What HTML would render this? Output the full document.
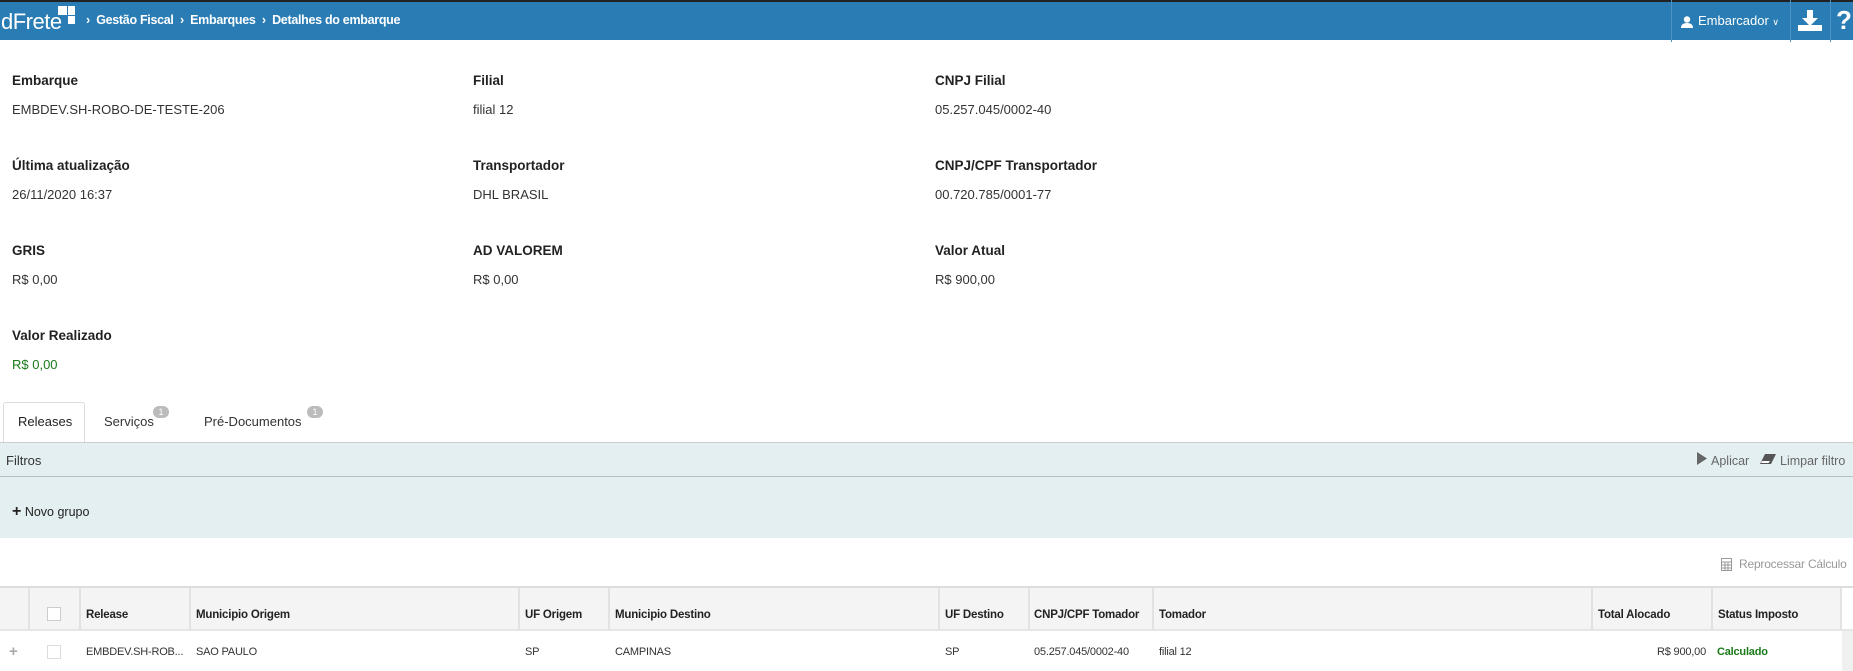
<!DOCTYPE html>
<html><head><meta charset="utf-8"><style>
*{box-sizing:border-box;margin:0;padding:0}
body{width:1853px;height:671px;overflow:hidden;background:#fff;font-family:"Liberation Sans",sans-serif;color:#333;position:relative}
.a{position:absolute;white-space:nowrap}
.hdr{position:absolute;left:0;top:0;width:1853px;height:40px;background:#2a7db4;border-top:2px solid #222}
.hdr .a{color:#fff}
.lbl{font-size:13.5px;color:#222;font-weight:bold}
.val{font-size:13px;color:#333}
.th{font-size:11.5px;font-weight:bold;color:#222;letter-spacing:-0.2px}
.td{font-size:11px;color:#333;letter-spacing:-0.2px}
.vl{position:absolute;top:588px;height:42px;width:2px;background:#e2e2e2}
</style></head><body>
<div class="hdr">
 <div class="a" style="left:1px;top:7px;font-size:22px;letter-spacing:-0.5px">dFrete</div>
 <div class="a" style="left:58px;top:4px;width:9px;height:9px;background:#fff"></div>
 <div class="a" style="left:68px;top:4px;width:7px;height:9px;background:#fff"></div>
 <div class="a" style="left:68px;top:14px;width:7px;height:8px;background:#fff"></div>
 <div class="a" style="left:86px;top:11px;font-size:12.5px;font-weight:bold;letter-spacing:-0.3px">›&nbsp; Gestão Fiscal &nbsp;›&nbsp; Embarques &nbsp;›&nbsp; Detalhes do embarque</div>
 <div class="a" style="left:1671px;top:-2px;width:1px;height:42px;background:#4b93c4"></div>
 <div class="a" style="left:1790px;top:-2px;width:1px;height:42px;background:#4b93c4"></div>
 <div class="a" style="left:1830px;top:-2px;width:1px;height:42px;background:#4b93c4"></div>
 <svg class="a" style="left:1681px;top:14px" width="12" height="12"><circle cx="6" cy="3.5" r="3.2" fill="#fff"/><path d="M0 12 Q0 7 6 7 Q12 7 12 12Z" fill="#fff"/></svg>
 <div class="a" style="left:1698px;top:11px;font-size:13px">Embarcador <span style="font-size:9px">∨</span></div>
 <svg class="a" style="left:1798px;top:8px" width="24" height="22"><path d="M9 0h6v8h5l-8 8-8-8h5z" fill="#fff"/><rect x="0" y="15" width="24" height="6" fill="#fff"/></svg>
 <div class="a" style="left:1836px;top:3px;font-size:26px;font-weight:bold">?</div>
</div>

<div class="a lbl" style="left:12px;top:73px">Embarque</div>
<div class="a val" style="left:12px;top:102px">EMBDEV.SH-ROBO-DE-TESTE-206</div>
<div class="a lbl" style="left:473px;top:73px">Filial</div>
<div class="a val" style="left:473px;top:102px">filial 12</div>
<div class="a lbl" style="left:935px;top:73px">CNPJ Filial</div>
<div class="a val" style="left:935px;top:102px">05.257.045/0002-40</div>

<div class="a lbl" style="left:12px;top:158px">Última atualização</div>
<div class="a val" style="left:12px;top:187px">26/11/2020 16:37</div>
<div class="a lbl" style="left:473px;top:158px">Transportador</div>
<div class="a val" style="left:473px;top:187px">DHL BRASIL</div>
<div class="a lbl" style="left:935px;top:158px">CNPJ/CPF Transportador</div>
<div class="a val" style="left:935px;top:187px">00.720.785/0001-77</div>

<div class="a lbl" style="left:12px;top:243px">GRIS</div>
<div class="a val" style="left:12px;top:272px">R$ 0,00</div>
<div class="a lbl" style="left:473px;top:243px">AD VALOREM</div>
<div class="a val" style="left:473px;top:272px">R$ 0,00</div>
<div class="a lbl" style="left:935px;top:243px">Valor Atual</div>
<div class="a val" style="left:935px;top:272px">R$ 900,00</div>

<div class="a lbl" style="left:12px;top:328px">Valor Realizado</div>
<div class="a val" style="left:12px;top:357px;color:#1a7a1a">R$ 0,00</div>

<div class="a" style="left:3px;top:402px;width:82px;height:41px;border:1px solid #ddd;border-bottom:none;background:#fff;border-radius:3px 3px 0 0"></div>
<div class="a" style="left:0;top:442px;width:1853px;height:1px;background:#ccc"></div>
<div class="a val" style="left:18px;top:414px;color:#222">Releases</div>
<div class="a val" style="left:104px;top:414px">Serviços</div>
<div class="a" style="left:153px;top:406px;width:16px;height:12px;border-radius:6px;background:#bbb;color:#fff;font-size:9px;text-align:center;line-height:12px">1</div>
<div class="a val" style="left:204px;top:414px">Pré-Documentos</div>
<div class="a" style="left:307px;top:406px;width:16px;height:12px;border-radius:6px;background:#bbb;color:#fff;font-size:9px;text-align:center;line-height:12px">1</div>

<div class="a" style="left:0;top:443px;width:1853px;height:95px;background:#e4eff1"></div>
<div class="a" style="left:0;top:476px;width:1853px;height:1px;background:#b9bfc1"></div>
<div class="a val" style="left:6px;top:453px">Filtros</div>
<svg class="a" style="left:1696px;top:452px" width="12" height="13"><path d="M1 0L11 6.5 1 13Z" fill="#666"/></svg>
<div class="a val" style="left:1711px;top:454px;color:#666;font-size:12.5px">Aplicar</div>
<svg class="a" style="left:1760px;top:454px" width="16" height="10"><path d="M5 0h11l-5 10H0Z" fill="#555"/><path d="M2 7h8l-1.5 2H1Z" fill="#fff"/></svg>
<div class="a val" style="left:1780px;top:454px;color:#666;font-size:12.5px">Limpar filtro</div>
<div class="a val" style="left:12px;top:505px;font-size:12.5px;color:#222"><b style="font-size:16px;line-height:12px">+</b> Novo grupo</div>

<svg class="a" style="left:1721px;top:558px" width="11" height="13"><rect x="0.5" y="0.5" width="10" height="12" fill="none" stroke="#999"/><path d="M0 4h11M0 7h11M0 10h11M4 4v9M7 4v9" stroke="#999"/></svg>
<div class="a val" style="left:1739px;top:557px;color:#999;font-size:12px;letter-spacing:-0.2px">Reprocessar Cálculo</div>

<div class="a" style="left:0;top:586px;width:1853px;height:2px;background:#ddd"></div>
<div class="a" style="left:0;top:588px;width:1840px;height:42px;background:#f4f4f4"></div>
<div class="a" style="left:0;top:629px;width:1853px;height:2px;background:#e6e6e6"></div>
<div class="vl" style="left:28px"></div><div class="vl" style="left:79px"></div><div class="vl" style="left:189px"></div>
<div class="vl" style="left:518px"></div><div class="vl" style="left:608px"></div><div class="vl" style="left:938px"></div>
<div class="vl" style="left:1028px"></div><div class="vl" style="left:1152px"></div><div class="vl" style="left:1591px"></div>
<div class="vl" style="left:1711px"></div><div class="vl" style="left:1840px"></div>
<div class="a" style="left:47px;top:607px;width:14px;height:14px;border:1px solid #ccc;background:#fff"></div>
<div class="a th" style="left:86px;top:609px">Release</div>
<div class="a th" style="left:196px;top:609px">Municipio Origem</div>
<div class="a th" style="left:525px;top:609px">UF Origem</div>
<div class="a th" style="left:615px;top:609px">Municipio Destino</div>
<div class="a th" style="left:945px;top:609px">UF Destino</div>
<div class="a th" style="left:1034px;top:609px">CNPJ/CPF Tomador</div>
<div class="a th" style="left:1159px;top:609px">Tomador</div>
<div class="a th" style="left:1598px;top:609px">Total Alocado</div>
<div class="a th" style="left:1718px;top:609px">Status Imposto</div>

<div class="a" style="left:9px;top:643px;color:#aaa;font-size:15px;font-weight:bold">+</div>
<div class="a" style="left:47px;top:645px;width:14px;height:14px;border:1px solid #ddd;background:#fff"></div>
<div class="a td" style="left:86px;top:646px">EMBDEV.SH-ROB...</div>
<div class="a td" style="left:196px;top:646px">SAO PAULO</div>
<div class="a td" style="left:525px;top:646px">SP</div>
<div class="a td" style="left:615px;top:646px">CAMPINAS</div>
<div class="a td" style="left:945px;top:646px">SP</div>
<div class="a td" style="left:1034px;top:646px">05.257.045/0002-40</div>
<div class="a td" style="left:1159px;top:646px">filial 12</div>
<div class="a td" style="left:1630px;top:646px;width:76px;text-align:right">R$ 900,00</div>
<div class="a td" style="left:1717px;top:646px;color:#1a7a1a;font-weight:bold">Calculado</div>
<div class="a" style="left:1842px;top:631px;width:11px;height:40px;background:#f0f0f0"></div>
</body></html>
